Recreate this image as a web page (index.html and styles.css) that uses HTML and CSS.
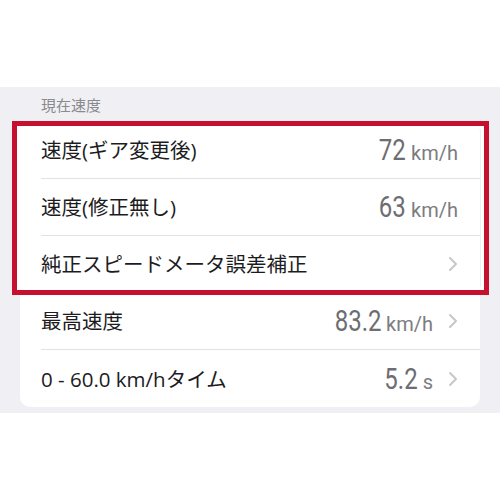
FILE: index.html
```html
<!DOCTYPE html>
<html lang="ja">
<head>
<meta charset="utf-8">
<link rel="stylesheet" href="styles.css">
</head>
<body>
<div class="band">
  <div class="section-title">現在速度</div>
  <div class="card">
    <div class="highlight">
      <div class="row">
        <span class="label">速度(ギア変更後)</span>
        <span class="value"><span class="num">72</span><span class="unit">km/h</span></span>
      </div>
      <div class="row">
        <span class="label">速度(修正無し)</span>
        <span class="value"><span class="num">63</span><span class="unit">km/h</span></span>
      </div>
      <div class="row">
        <span class="label">純正スピードメータ誤差補正</span>
        <span class="value"><svg class="chev" width="10" height="16" viewBox="0 0 10 16"><polyline points="2,2 8,8 2,14" fill="none" stroke="#c7c7cc" stroke-width="2" stroke-linecap="round" stroke-linejoin="round"/></svg></span>
      </div>
    </div>
    <div class="row">
      <span class="label">最高速度</span>
      <span class="value"><span class="num">83.2</span><span class="unit">km/h</span><svg class="chev" width="10" height="16" viewBox="0 0 10 16"><polyline points="2,2 8,8 2,14" fill="none" stroke="#c7c7cc" stroke-width="2" stroke-linecap="round" stroke-linejoin="round"/></svg></span>
    </div>
    <div class="row last">
      <span class="label">0 - 60.0 km/hタイム</span>
      <span class="value"><span class="num">5.2</span><span class="unit">s</span><svg class="chev" width="10" height="16" viewBox="0 0 10 16"><polyline points="2,2 8,8 2,14" fill="none" stroke="#c7c7cc" stroke-width="2" stroke-linecap="round" stroke-linejoin="round"/></svg></span>
    </div>
  </div>
</div>
</body>
</html>
```

FILE: styles.css
```css
html, body {
  margin: 0;
  padding: 0;
  background: #ffffff;
}
body {
  font-family: "Noto Sans CJK JP", "Noto Sans", sans-serif;
  color: #1c1c1e;
}
.band {
  margin-top: 87px;
  background: #f0f0f4;
  padding: 8px 20px 6px;
}
.section-title {
  padding-left: 21px;
  font-size: 15px;
  line-height: 20px;
  color: #8a8a8e;
  margin-bottom: 7px;
}
.card {
  background: #ffffff;
  border-radius: 10px;
}
.highlight {
  position: relative;
}
.highlight::after {
  content: "";
  position: absolute;
  top: -1px;
  bottom: -2px;
  left: -8px;
  right: -9px;
  border: 5px solid #c5112f;
  box-shadow: inset 0 0 0 3px #ffffff;
  pointer-events: none;
}
.row {
  box-sizing: border-box;
  height: 57px;
  margin-left: 21px;
  padding-right: 22px;
  display: flex;
  align-items: center;
  justify-content: space-between;
  border-bottom: 1px solid #e2e2e6;
}
.row.last {
  border-bottom: none;
}
.label {
  font-family: "Open Sans", "Noto Sans CJK JP", sans-serif;
  font-size: 20.5px;
  line-height: 24px;
}
.value {
  display: flex;
  align-items: baseline;
  color: #6d6d72;
}
.num {
  display: inline-block;
  font-family: Roboto, sans-serif;
  font-size: 30px;
  line-height: 30px;
  transform: scaleX(0.8);
  transform-origin: right center;
}
.unit {
  font-family: Roboto, "Liberation Sans", sans-serif;
  font-size: 20px;
  margin-left: 5px;
  color: #7c7c81;
}
.chev {
  align-self: center;
  margin-left: 15px;
}
```
